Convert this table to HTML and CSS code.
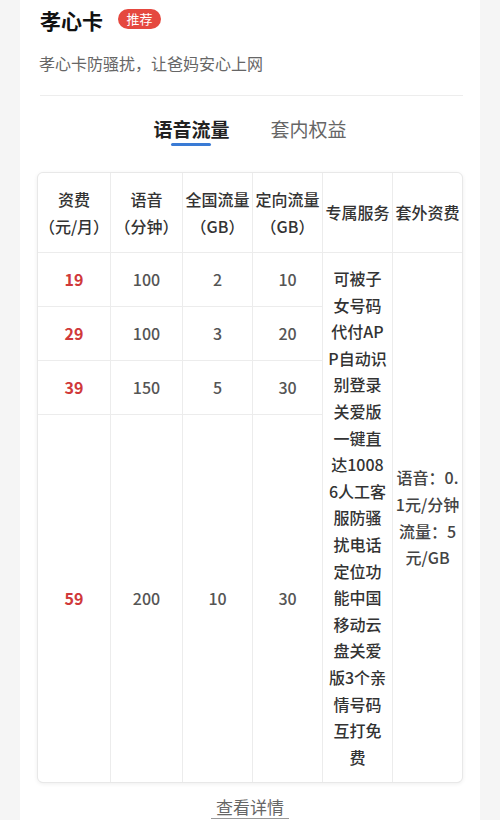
FILE: index.html
```html
<!DOCTYPE html>
<html lang="zh-CN">
<head>
<meta charset="utf-8">
<title>孝心卡</title>
<link rel="stylesheet" href="styles.css">
</head>
<body>
<div class="card">
  <div class="head">
    <div class="title-row">
      <h1 class="title">孝心卡</h1>
      <span class="badge">推荐</span>
    </div>
    <p class="subtitle">孝心卡防骚扰，让爸妈安心上网</p>
  </div>
  <div class="tabs">
    <div class="tab active">语音流量<span class="tab-bar"></span></div>
    <div class="tab">套内权益</div>
  </div>
  <div class="table">
    <div class="cell th">资费<br>（元/月）</div>
    <div class="cell th">语音<br>（分钟）</div>
    <div class="cell th">全国流量<br>（GB）</div>
    <div class="cell th">定向流量<br>（GB）</div>
    <div class="cell th">专属服务</div>
    <div class="cell th">套外资费</div>

    <div class="cell price">19</div>
    <div class="cell num">100</div>
    <div class="cell num">2</div>
    <div class="cell num">10</div>
    <div class="cell service">可被子女号码代付APP自动识别登录关爱版一键直达10086人工客服防骚扰电话定位功能中国移动云盘关爱版3个亲情号码互打免费</div>
    <div class="cell extra">语音：0.<br>1元/分钟<br>流量：5<br>元/GB</div>

    <div class="cell price">29</div>
    <div class="cell num">100</div>
    <div class="cell num">3</div>
    <div class="cell num">20</div>

    <div class="cell price">39</div>
    <div class="cell num">150</div>
    <div class="cell num">5</div>
    <div class="cell num">30</div>

    <div class="cell price">59</div>
    <div class="cell num">200</div>
    <div class="cell num">10</div>
    <div class="cell num">30</div>
  </div>
  <div class="more-wrap"><a class="more">查看详情</a></div>
</div>
</body>
</html>
```
FILE: styles.css
```css
* { box-sizing: border-box; }
html, body { margin: 0; padding: 0; }
body {
  background: #f5f5f5;
  font-family: "Noto Sans CJK SC", "Noto Sans", sans-serif;
  color: #333;
}
.card {
  margin: 0 20px;
  background: #fff;
  padding: 5px 17px 0;
  min-height: 820px;
}
.head {
  margin: 0 0 0 3px;
  border-bottom: 1px solid #ededed;
  padding-bottom: 20px;
}
.title-row {
  display: flex;
  align-items: center;
  gap: 15px;
  height: 30px;
}
.title {
  margin: 0;
  font-size: 21px;
  line-height: 30px;
  font-weight: 700;
  color: #111;
}
.badge {
  background: #e5483f;
  color: #fff;
  font-size: 13px;
  line-height: 20px;
  height: 20px;
  padding: 0 8.5px;
  border-radius: 10px;
  margin-top: -2px;
}
.subtitle {
  margin: 16px 0 0 -1px;
  font-size: 16px;
  line-height: 24px;
  color: #666;
}
.tabs {
  display: flex;
  justify-content: center;
  gap: 41px;
  margin-top: 20px;
  height: 30px;
}
.tab {
  position: relative;
  font-size: 19px;
  line-height: 26px;
  color: #666;
}
.tab.active {
  color: #222;
  font-weight: 700;
}
.tab-bar {
  position: absolute;
  left: 50%;
  top: 27px;
  width: 40px;
  height: 3px;
  margin-left: -20px;
  border-radius: 2px;
  background: #3a7bd5;
}
.table {
  margin-top: 26px;
  display: grid;
  grid-template-columns: 72px 71px 69px 69px 69px 69px;
  grid-template-rows: 79px 53px 53px 53px auto;
  gap: 1px;
  background: #ececec;
  border: 1px solid #e8e8e8;
  border-radius: 6px;
  overflow: hidden;
  box-shadow: 0 1px 4px rgba(0, 0, 0, 0.07);
}
.cell {
  background: #fff;
  display: flex;
  align-items: center;
  justify-content: center;
  text-align: center;
  font-size: 16px;
  line-height: 26.6px;
  font-weight: 500;
}
.th {
  color: #333;
  white-space: nowrap;
}
.price {
  color: #d0393a;
  font-weight: 700;
}
.num {
  color: #555;
}
.service {
  grid-column: 5;
  grid-row: 2 / 6;
  padding: 12px 5px;
  word-break: break-all;
  color: #333;
}
.extra {
  grid-column: 6;
  grid-row: 2 / 6;
  padding: 12px 0;
  white-space: nowrap;
  color: #444;
}
.more-wrap {
  display: flex;
  justify-content: center;
  margin-top: 13px;
}
.more {
  font-size: 17px;
  line-height: 22px;
  color: #666;
  padding: 0 5px;
  border-bottom: 1px solid #999;
}
```
